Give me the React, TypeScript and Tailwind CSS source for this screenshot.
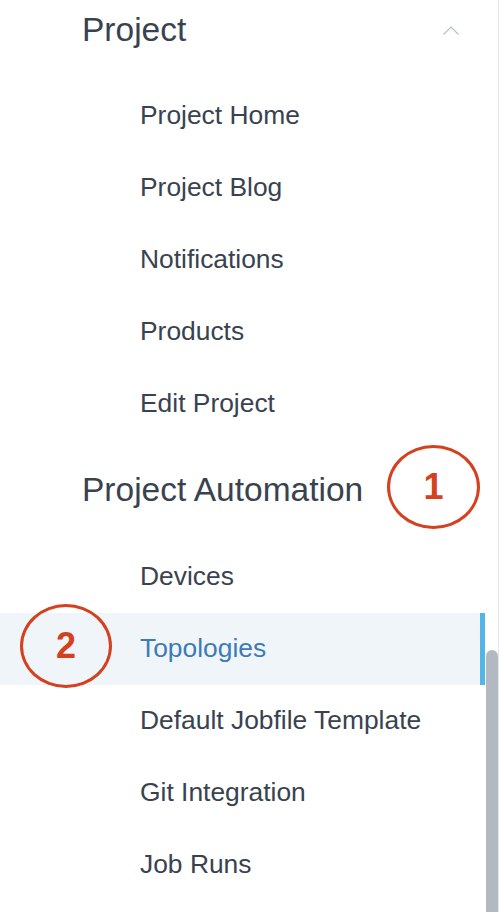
import React from "react";

const projectLinks = ["Project Home", "Project Blog", "Notifications", "Products", "Edit Project"];
const automationLinks = ["Devices", "Topologies", "Default Jobfile Template", "Git Integration", "Job Runs"];

function Marker({ n, className }: { n: string; className: string }) {
  return (
    <div
      className={`absolute flex items-center justify-center rounded-[50%] border-[3px] border-[#d5401f] text-[#d5401f] text-[36px] font-bold ${className}`}
    >
      {n}
    </div>
  );
}

export default function App() {
  return (
    <div
      className="relative w-[499px] h-[912px] overflow-hidden bg-white border-r border-[#e3e6ea] text-[#39424f]"
      style={{ fontFamily: '"Liberation Sans", Arial, sans-serif' }}
    >
      <div className="flex items-center justify-between h-[60px] pl-[82px] pr-[39px]">
        <span className="text-[33.5px] font-light">Project</span>
        <svg width="16" height="9" viewBox="0 0 16 9" fill="none" stroke="#b4c0cd" strokeWidth="1.2">
          <path d="M0.5 8.5 L8 1 L15.5 8.5" />
        </svg>
      </div>

      <ul className="pt-[20px]">
        {projectLinks.map((l) => (
          <li key={l} className="flex items-center h-[72px] pl-[140px] text-[26.4px]">
            {l}
          </li>
        ))}
      </ul>

      <div className="relative flex items-center h-[101px] pl-[82px] text-[33.5px] font-light">
        Project Automation
        <Marker n="1" className="left-[387px] top-[5px] w-[93px] h-[84px]" />
      </div>

      <ul>
        {automationLinks.map((l) =>
          l === "Topologies" ? (
            <li
              key={l}
              className="relative flex items-center h-[72px] w-[485px] pl-[140px] text-[26.4px] text-[#3d7bb5] bg-[#f0f5fa] border-r-[5px] border-[#52b5e6]"
            >
              {l}
              <Marker n="2" className="left-[20px] top-[-9px] w-[92px] h-[84px]" />
            </li>
          ) : (
            <li key={l} className="flex items-center h-[72px] pl-[140px] text-[26.4px]">
              {l}
            </li>
          )
        )}
      </ul>

      <div className="absolute left-[486px] top-[650px] w-[12px] h-[300px] rounded-full bg-[#b2b9c1]" />
    </div>
  );
}
